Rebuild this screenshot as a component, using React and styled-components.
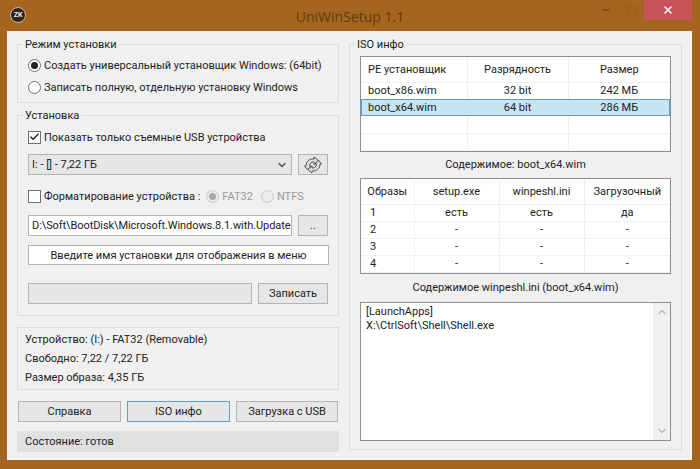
import React from "react";
import styled, { createGlobalStyle } from "styled-components";
import { ChevronDown, ChevronUp, Check, X, Minus, Square } from "lucide-react";

const GlobalStyle = createGlobalStyle`
  html, body {
    margin: 0;
    padding: 0;
    background: #a5651e;
  }
  * {
    box-sizing: border-box;
  }
`;

const Frame = styled.div`
  width: 700px;
  height: 469px;
  background: #a5651e;
  padding: 0 8px 9px 7px;
  display: flex;
  flex-direction: column;
  font-family: Roboto, "Noto Sans", sans-serif;
  font-size: 11px;
  color: #222;
  overflow: hidden;
`;

const TitleBar = styled.div`
  height: 31px;
  flex: none;
  display: flex;
  align-items: flex-start;
`;

const Logo = styled.div`
  width: 16px;
  height: 16px;
  margin: 7px 0 0 3px;
  border-radius: 50%;
  background: #2b2621;
  border: 1px solid #d9b78c;
  color: #eee;
  font-size: 7px;
  font-weight: 700;
  line-height: 14px;
  text-align: center;
`;

const Title = styled.div`
  flex: 1;
  padding: 7px 0 0 82px;
  text-align: center;
  font-family: "Open Sans", sans-serif;
  font-size: 14px;
  line-height: 20px;
  color: #5f3c14;
`;

const WinButton = styled.div`
  width: ${(p) => p.$w}px;
  height: 20px;
  display: flex;
  align-items: center;
  justify-content: center;
  background: ${(p) => (p.$close ? "#c9535a" : "transparent")};
  color: ${(p) => p.$color};
`;

const Client = styled.div`
  flex: 1;
  background: #f0f0f0;
  display: flex;
  padding: 6px 10px 8px 10px;
  gap: 10px;
  box-shadow: inset 0 0 0 1px #fbf6ee;
`;

const LeftColumn = styled.div`
  width: 322px;
  display: flex;
  flex-direction: column;
`;

const RightColumn = styled.div`
  flex: 1;
  display: flex;
  align-items: flex-start;
`;

const Group = styled.fieldset`
  margin: 0 0 ${(p) => p.$gap || 0}px;
  padding: ${(p) => p.$pad || "0 10px"};
  height: ${(p) => p.$h}px;
  min-width: 0;
  width: 100%;
  flex: none;
  border: 1px solid #dcdcdc;
  display: flex;
  flex-direction: column;
`;

const Legend = styled.legend`
  margin-left: -5px;
  padding: 0 2px;
  line-height: 15px;
`;

const Row = styled.div`
  display: flex;
  align-items: center;
  height: ${(p) => p.$h || 22}px;
  margin-top: ${(p) => p.$top || 0}px;
  gap: ${(p) => p.$gap || 0}px;
  white-space: nowrap;
`;

const RadioDot = styled.span`
  width: 13px;
  height: 13px;
  flex: none;
  border-radius: 50%;
  border: 1px solid ${(p) => (p.$disabled ? "#c8c8c8" : "#707070")};
  background: ${(p) => (p.$disabled ? "#ececec" : "#fff")};
  margin-right: 3px;
  display: flex;
  align-items: center;
  justify-content: center;
  &::after {
    content: "";
    display: ${(p) => (p.$on ? "block" : "none")};
    width: 7px;
    height: 7px;
    border-radius: 50%;
    background: ${(p) => (p.$disabled ? "#a8a8a8" : "#222")};
  }
`;

const CheckBox = styled.span`
  width: 13px;
  height: 13px;
  flex: none;
  border: 1px solid #707070;
  background: #fff;
  margin-right: 3px;
  display: flex;
  align-items: center;
  justify-content: center;
  color: #222;
`;

const Muted = styled.span`
  color: ${(p) => (p.$disabled ? "#9a9a9a" : "inherit")};
  margin-right: ${(p) => p.$right || 0}px;
`;

const Field = styled.div`
  width: ${(p) => p.$w}px;
  height: ${(p) => p.$h || 21}px;
  flex: none;
  display: flex;
  align-items: center;
  justify-content: ${(p) => (p.$center ? "center" : "space-between")};
  padding: 0 3px;
  border: 1px solid #b4b4b4;
  background: ${(p) => p.$bg || "#fff"};
  letter-spacing: ${(p) => p.$tight || 0}px;
  white-space: nowrap;
  overflow: hidden;
`;

const Button = styled.div`
  width: ${(p) => p.$w}px;
  height: ${(p) => p.$h || 21}px;
  flex: none;
  display: flex;
  align-items: center;
  justify-content: center;
  border: 1px solid ${(p) => (p.$focus ? "#5d9fd3" : "#b4b4b4")};
  background: #e6e6e6;
`;

const InfoLine = styled.div`
  height: 19px;
  line-height: 19px;
`;

const ButtonRow = styled.div`
  display: flex;
  gap: 6px;
  padding: 0 1px;
  margin-bottom: 9px;
`;

const StatusBar = styled.div`
  height: 21px;
  line-height: 21px;
  padding-left: 8px;
  background: #dfe1e1;
`;

const TableBox = styled.div`
  height: ${(p) => p.$h}px;
  flex: none;
  border: 1px solid #8f8f8f;
  background: #fff;
  overflow: hidden;
`;

const Table = styled.table`
  width: 100%;
  border-collapse: collapse;
  table-layout: fixed;
  font-size: 11px;
`;

const HeadCell = styled.th`
  height: ${(p) => p.$h}px;
  font-weight: 400;
  text-align: ${(p) => p.$align || "center"};
  padding: 0 0 0 ${(p) => p.$indent || 0}px;
  border-right: 1px solid #f0f0f0;
  border-bottom: 1px solid #f0f0f0;
  &:last-child {
    border-right: none;
  }
`;

const Cell = styled.td`
  height: ${(p) => p.$h || 17}px;
  padding: 0 0 0 ${(p) => p.$indent || 0}px;
  text-align: ${(p) => p.$align || "center"};
  border-right: 1px solid #f0f0f0;
  border-bottom: 1px solid #f0f0f0;
  &:last-child {
    border-right: none;
  }
`;

const SelectedRow = styled.tr`
  background: #c6e4f3;
  outline: 1px solid #5c9fc6;
  outline-offset: -1px;

  td {
    border-color: transparent;
  }
`;

const Caption = styled.div`
  height: ${(p) => p.$h}px;
  flex: none;
  display: flex;
  align-items: center;
  justify-content: center;
  padding-bottom: 2px;
`;

const TextArea = styled.div`
  height: 139px;
  flex: none;
  display: flex;
  border: 1px solid #8f8f8f;
  background: #fff;
`;

const TextContent = styled.pre`
  flex: 1;
  margin: 0;
  padding: 2px 5px;
  font-family: inherit;
  font-size: 11px;
  line-height: 14px;
`;

const ScrollBar = styled.div`
  width: 17px;
  background: #f0f0f0;
  display: flex;
  flex-direction: column;
  justify-content: space-between;
  align-items: center;
  padding: 3px 0;
  color: #bcbcbc;
`;

const isoRows = [
  ["boot_x86.wim", "32 bit", "242 МБ"],
  ["boot_x64.wim", "64 bit", "286 МБ"],
];

const imageRows = [
  ["1", "есть", "есть", "да"],
  ["2", "-", "-", "-"],
  ["3", "-", "-", "-"],
  ["4", "-", "-", "-"],
];

function RefreshIcon() {
  return (
    <svg width="20" height="18" viewBox="0 0 20 18" fill="#dcdcdc" stroke="#555" strokeWidth="1" strokeLinejoin="round">
      <path d="M3 10 C3 5 7 2.5 11 3 L11 1 L15.5 4.5 L11 8.5 L11 6 C8.5 5.7 6.5 7.5 6.5 10 L8 10 L4.7 14 L1.5 10 Z" />
      <path d="M17 8 C17 13 13 15.5 9 15 L9 17 L4.8 13.5 L9 9.8 L9 12 C11.5 12.3 13.5 10.5 13.5 8 L12 8 L15.3 4 L18.5 8 Z" />
    </svg>
  );
}

function IsoTable() {
  return (
    <TableBox $h={96}>
      <Table>
        <colgroup>
          <col style={{ width: 106 }} />
          <col style={{ width: 101 }} />
          <col />
        </colgroup>
        <thead>
          <tr>
            <HeadCell $h={25} $align="left" $indent={7}>PE установщик</HeadCell>
            <HeadCell $h={25}>Разрядность</HeadCell>
            <HeadCell $h={25}>Размер</HeadCell>
          </tr>
        </thead>
        <tbody>
          {isoRows.map((row, i) => {
            const Tr = i === 1 ? SelectedRow : "tr";
            return (
              <Tr key={row[0]}>
                <Cell $align="left" $indent={7}>{row[0]}</Cell>
                <Cell>{row[1]}</Cell>
                <Cell>{row[2]}</Cell>
              </Tr>
            );
          })}
          <tr>
            <Cell /><Cell /><Cell />
          </tr>
          <tr>
            <Cell /><Cell /><Cell />
          </tr>
        </tbody>
      </Table>
    </TableBox>
  );
}

function ImagesTable() {
  return (
    <TableBox $h={96}>
      <Table>
        <colgroup>
          <col style={{ width: 53 }} />
          <col style={{ width: 85 }} />
          <col style={{ width: 85 }} />
          <col />
        </colgroup>
        <thead>
          <tr>
            <HeadCell $h={25}>Образы</HeadCell>
            <HeadCell $h={25}>setup.exe</HeadCell>
            <HeadCell $h={25}>winpeshl.ini</HeadCell>
            <HeadCell $h={25}>Загрузочный</HeadCell>
          </tr>
        </thead>
        <tbody>
          {imageRows.map((row) => (
            <tr key={row[0]}>
              <Cell $align="left" $indent={9}>{row[0]}</Cell>
              <Cell>{row[1]}</Cell>
              <Cell>{row[2]}</Cell>
              <Cell>{row[3]}</Cell>
            </tr>
          ))}
        </tbody>
      </Table>
    </TableBox>
  );
}

export default function App() {
  return (
    <>
      <GlobalStyle />
      <Frame>
        <TitleBar>
          <Logo>ZK</Logo>
          <Title>UniWinSetup 1.1</Title>
          <WinButton $w={28} $color="#5f3c14"><Minus size={10} strokeWidth={2.5} /></WinButton>
          <WinButton $w={24} $color="#8a5a22"><Square size={10} strokeWidth={1.5} /></WinButton>
          <WinButton $w={48} $close $color="#fff"><X size={12} strokeWidth={3} /></WinButton>
        </TitleBar>
        <Client>
          <LeftColumn>
            <Group $h={66} $gap={5}>
              <Legend>Режим установки</Legend>
              <Row $top={2}>
                <RadioDot $on />
                Создать универсальный установщик Windows: (64bit)
              </Row>
              <Row>
                <RadioDot />
                Записать полную, отдельную установку Windows
              </Row>
            </Group>
            <Group $h={208} $gap={11}>
              <Legend>Установка</Legend>
              <Row $h={18} $top={5}>
                <CheckBox><Check size={12} strokeWidth={3} /></CheckBox>
                Показать только съемные USB устройства
              </Row>
              <Row $h={21} $top={8} $gap={6}>
                <Field $w={264} $bg="#e6e6e6">
                  I: - [] - 7,22 ГБ
                  <ChevronDown size={12} strokeWidth={3} color="#555" />
                </Field>
                <Button $w={30}><RefreshIcon /></Button>
              </Row>
              <Row $h={20} $top={11}>
                <CheckBox />
                <Muted $right={6}>Форматирование устройства :</Muted>
                <RadioDot $on $disabled />
                <Muted $disabled $right={8}>FAT32</Muted>
                <RadioDot $disabled />
                <Muted $disabled>NTFS</Muted>
              </Row>
              <Row $h={21} $top={9} $gap={6}>
                <Field $w={264} $tight={-0.08}>D:\Soft\BootDisk\Microsoft.Windows.8.1.with.Update</Field>
                <Button $w={30}>..</Button>
              </Row>
              <Row $h={20} $top={9}>
                <Field $w={301} $h={20} $center>Введите имя установки для отображения в меню</Field>
              </Row>
              <Row $h={21} $top={18} $gap={6}>
                <Field $w={224} $bg="#e6e6e6" />
                <Button $w={70}>Записать</Button>
              </Row>
            </Group>
            <Group $h={63} $gap={11} $pad="2px 7px">
              <InfoLine>Устройство: (I:) - FAT32 (Removable)</InfoLine>
              <InfoLine>Свободно: 7,22 / 7,22 ГБ</InfoLine>
              <InfoLine>Размер образа: 4,35 ГБ</InfoLine>
            </Group>
            <ButtonRow>
              <Button $w={103}>Справка</Button>
              <Button $w={103} $focus>ISO инфо</Button>
              <Button $w={102}>Загрузка с USB</Button>
            </ButtonRow>
            <StatusBar>Состояние: готов</StatusBar>
          </LeftColumn>
          <RightColumn>
            <Group $h={413} $pad="4px 10px 0 10px">
              <Legend>ISO инфо</Legend>
              <IsoTable />
              <Caption $h={26}>Содержимое: boot_x64.wim</Caption>
              <ImagesTable />
              <Caption $h={28}>Содержимое winpeshl.ini (boot_x64.wim)</Caption>
              <TextArea>
                <TextContent>{"[LaunchApps]\nX:\\CtrlSoft\\Shell\\Shell.exe"}</TextContent>
                <ScrollBar>
                  <ChevronUp size={12} strokeWidth={3} />
                  <ChevronDown size={12} strokeWidth={3} />
                </ScrollBar>
              </TextArea>
            </Group>
          </RightColumn>
        </Client>
      </Frame>
    </>
  );
}
